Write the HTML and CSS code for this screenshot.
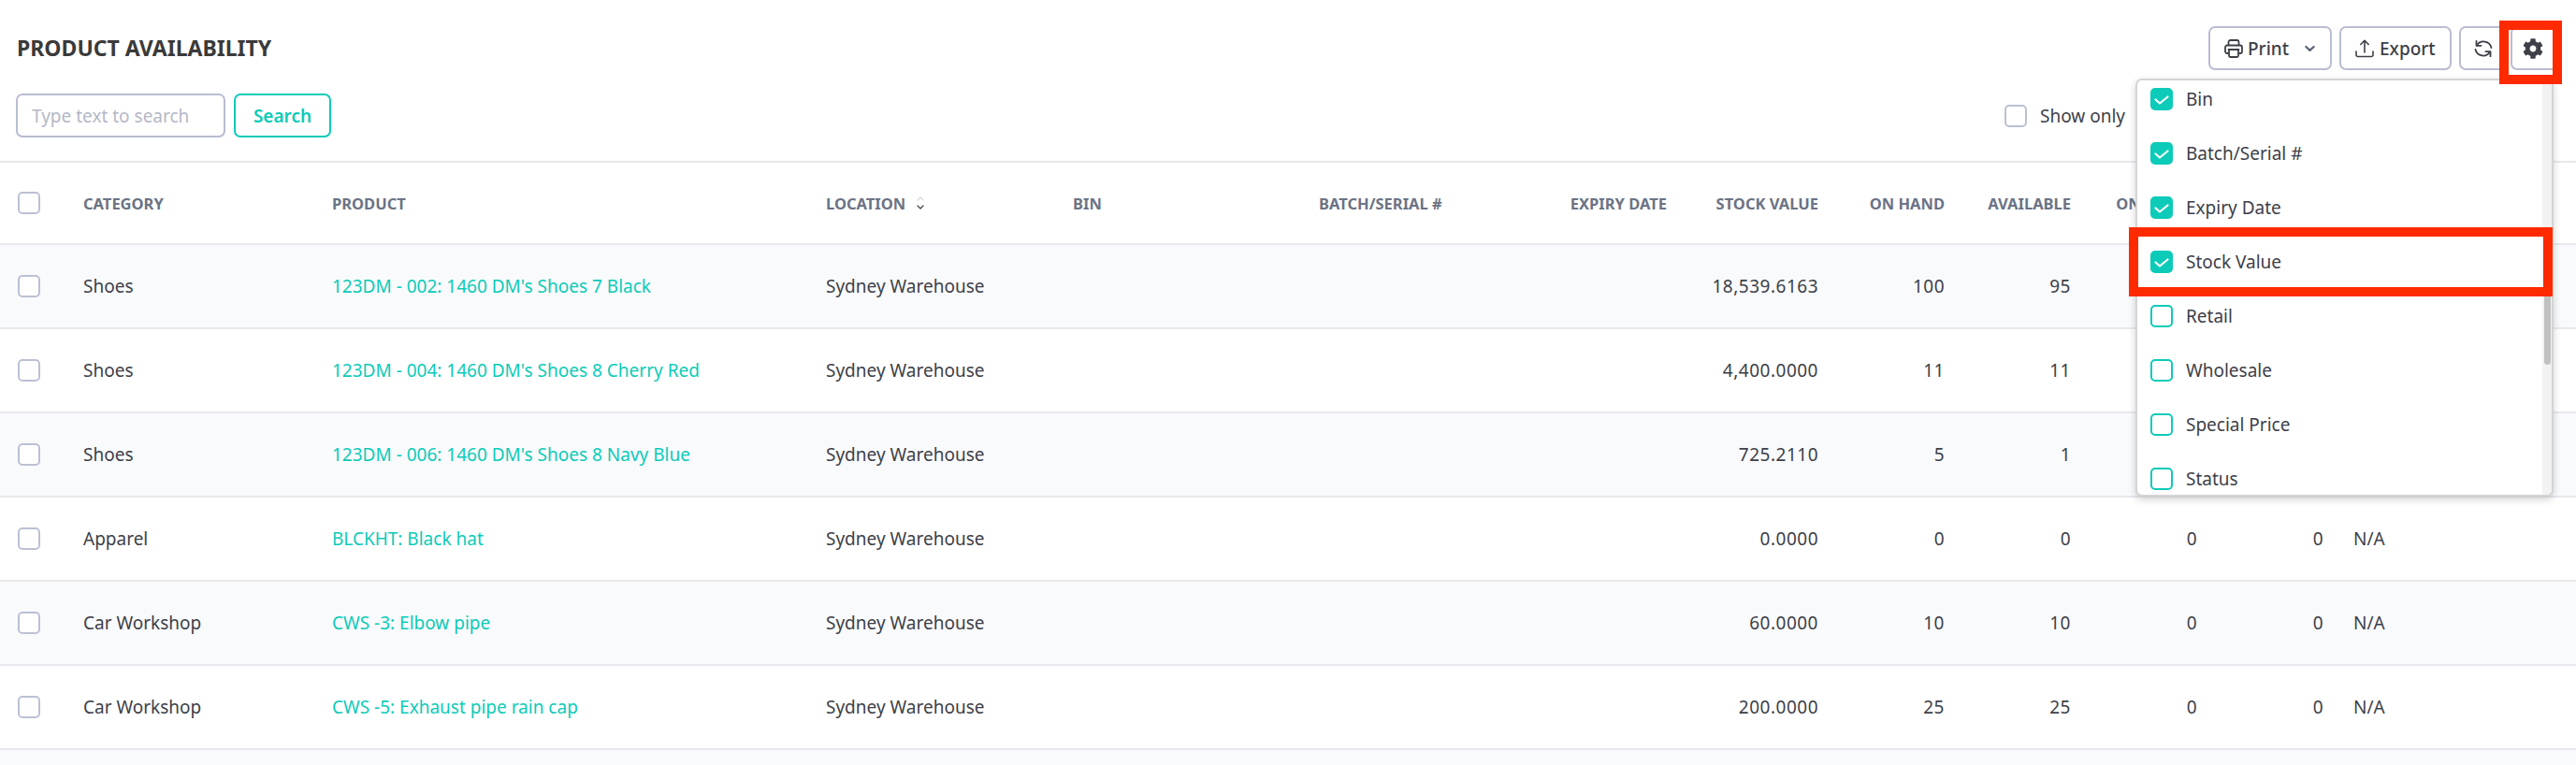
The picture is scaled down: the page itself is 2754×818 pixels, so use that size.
FILE: index.html
```html
<!DOCTYPE html>
<html lang="en">
<head>
<meta charset="utf-8">
<title>Product Availability</title>
<link rel="stylesheet" href="styles.css">
</head>
<body>
<svg class="defs" width="0" height="0" aria-hidden="true">
  <symbol id="tick" viewBox="0 0 24 24"><path d="M5.500 12.500L10 16.500 18.500 9.500" fill="none" stroke="#fff" stroke-width="2.200" stroke-linecap="round" stroke-linejoin="round"/></symbol>
</svg>
<div class="page">
  <header class="top">
    <h1 class="title">PRODUCT AVAILABILITY</h1>
    <div class="actions">
      <button class="btn btn-print">
        <svg class="ico" viewBox="0 0 20 20" fill="none" stroke="#3d4048" stroke-width="1.800" stroke-linejoin="round"><path d="M4.500 6.500V3A2 2 0 0 1 6.500 1h7a2 2 0 0 1 2 2v3.500"/><path d="M4.500 15H3a2 2 0 0 1-2-2V8.500a2 2 0 0 1 2-2h14a2 2 0 0 1 2 2V13a2 2 0 0 1-2 2h-1.500"/><path d="M3.800 11h12.400M5 11v6.500A1.500 1.500 0 0 0 6.500 19h7a1.500 1.500 0 0 0 1.500-1.500V11"/></svg>
        <span>Print</span>
        <svg class="chev" viewBox="0 0 12 8" fill="none" stroke="#5b6274" stroke-width="2.400" stroke-linecap="round" stroke-linejoin="round"><path d="M1.500 1.800L6 6l4.500-4.200"/></svg>
      </button>
      <button class="btn btn-export">
        <svg class="ico" viewBox="0 0 20 20" fill="none" stroke="#3d4048" stroke-width="1.600" stroke-linecap="round" stroke-linejoin="round"><path d="M10 14V1.500M5.800 5.500L10 1.300l4.200 4.200"/><path d="M1 13v3.700A1.800 1.800 0 0 0 2.800 18.500h14.400a1.800 1.800 0 0 0 1.800-1.800V13"/></svg>
        <span>Export</span>
      </button>
      <button class="btn btn-icon" aria-label="Refresh">
        <svg class="ico" viewBox="0 0 20 20" fill="none" stroke="#3d4048" stroke-width="1.800" stroke-linecap="round" stroke-linejoin="round"><path d="M18.500 9A8.500 8.500 0 0 0 3 6.500"/><path d="M2.500 1.800v5h5"/><path d="M1.500 11A8.500 8.500 0 0 0 17 13.500"/><path d="M17.500 18.200v-5h-5"/></svg>
      </button>
      <button class="btn btn-icon btn-gear" aria-label="Settings">
        <svg class="gear" viewBox="0 0 512 512"><path fill="#3d4048" d="M487.400 315.700l-42.600-24.600c4.300-23.200 4.300-47 0-70.200l42.600-24.600c4.900-2.800 7.100-8.600 5.500-14-11.100-35.600-30-67.800-54.700-94.600-3.800-4.100-10-5.100-14.800-2.300L380.800 110c-17.900-15.400-38.500-27.300-60.800-35.100V25.800c0-5.600-3.900-10.500-9.400-11.700-36.700-8.200-74.300-7.800-109.200 0-5.500 1.200-9.400 6.100-9.400 11.700V75c-22.200 7.900-42.800 19.800-60.800 35.100L88.700 85.500c-4.900-2.800-11-1.900-14.800 2.300-24.700 26.700-43.600 58.900-54.700 94.600-1.700 5.400.6 11.200 5.500 14L67.300 221c-4.300 23.200-4.300 47 0 70.200l-42.600 24.600c-4.900 2.800-7.100 8.600-5.500 14 11.100 35.600 30 67.800 54.700 94.600 3.800 4.100 10 5.100 14.800 2.300l42.600-24.600c17.900 15.400 38.500 27.300 60.800 35.100v49.200c0 5.600 3.900 10.500 9.400 11.700 36.700 8.200 74.300 7.800 109.200 0 5.500-1.200 9.400-6.100 9.400-11.700v-49.200c22.200-7.900 42.800-19.800 60.800-35.100l42.600 24.600c4.900 2.800 11 1.900 14.800-2.300 24.700-26.700 43.600-58.900 54.700-94.600 1.500-5.500-.7-11.300-5.600-14.100zM256 336c-44.100 0-80-35.900-80-80s35.900-80 80-80 80 35.900 80 80-35.900 80-80 80z"/></svg>
      </button>
    </div>
  </header>

  <div class="filters">
    <div class="search">
      <input class="search-input" type="text" placeholder="Type text to search">
      <button class="btn-search">Search</button>
    </div>
    <label class="show-only"><span class="cb"></span><span>Show only</span></label>
  </div>

  <table class="grid">
    <colgroup>
      <col class="c-check"><col class="c-cat"><col class="c-prod"><col class="c-loc"><col class="c-bin"><col class="c-batch"><col class="c-exp"><col class="c-stock"><col class="c-num"><col class="c-num"><col class="c-num"><col class="c-num"><col>
    </colgroup>
    <thead>
      <tr>
        <th><span class="cb"></span></th>
        <th>Category</th>
        <th>Product</th>
        <th><span class="sort">Location
          <svg class="sort-ico" viewBox="0 0 8 16" fill="none" stroke-width="1.200" stroke-linecap="round" stroke-linejoin="round"><path d="M1 5l3-3 3 3" stroke="#d5d7df"/><path d="M1 11l3 3 3-3" stroke="#3d4048"/></svg>
        </span></th>
        <th>Bin</th>
        <th>Batch/Serial #</th>
        <th class="r">Expiry Date</th>
        <th class="r">Stock Value</th>
        <th class="r">On Hand</th>
        <th class="r">Available</th>
        <th class="r">On Order</th>
        <th></th>
        <th></th>
      </tr>
    </thead>
    <tbody>
      <tr><td><span class="cb"></span></td><td>Shoes</td><td><a href="#">123DM - 002: 1460 DM's Shoes 7 Black</a></td><td>Sydney Warehouse</td><td></td><td></td><td></td><td class="r">18,539.6163</td><td class="r">100</td><td class="r">95</td><td></td><td></td><td></td></tr>
      <tr><td><span class="cb"></span></td><td>Shoes</td><td><a href="#">123DM - 004: 1460 DM's Shoes 8 Cherry Red</a></td><td>Sydney Warehouse</td><td></td><td></td><td></td><td class="r">4,400.0000</td><td class="r">11</td><td class="r">11</td><td></td><td></td><td></td></tr>
      <tr><td><span class="cb"></span></td><td>Shoes</td><td><a href="#">123DM - 006: 1460 DM's Shoes 8 Navy Blue</a></td><td>Sydney Warehouse</td><td></td><td></td><td></td><td class="r">725.2110</td><td class="r">5</td><td class="r">1</td><td></td><td></td><td></td></tr>
      <tr><td><span class="cb"></span></td><td>Apparel</td><td><a href="#">BLCKHT: Black hat</a></td><td>Sydney Warehouse</td><td></td><td></td><td></td><td class="r">0.0000</td><td class="r">0</td><td class="r">0</td><td class="r">0</td><td class="r">0</td><td>N/A</td></tr>
      <tr><td><span class="cb"></span></td><td>Car Workshop</td><td><a href="#">CWS -3: Elbow pipe</a></td><td>Sydney Warehouse</td><td></td><td></td><td></td><td class="r">60.0000</td><td class="r">10</td><td class="r">10</td><td class="r">0</td><td class="r">0</td><td>N/A</td></tr>
      <tr><td><span class="cb"></span></td><td>Car Workshop</td><td><a href="#">CWS -5: Exhaust pipe rain cap</a></td><td>Sydney Warehouse</td><td></td><td></td><td></td><td class="r">200.0000</td><td class="r">25</td><td class="r">25</td><td class="r">0</td><td class="r">0</td><td>N/A</td></tr>
      <tr><td colspan="13"></td></tr>
    </tbody>
  </table>

  <div class="menu">
    <ul class="menu-list">
      <li class="menu-item"><span class="mcb on"><svg viewBox="0 0 24 24"><use href="#tick"/></svg></span>Bin</li>
      <li class="menu-item"><span class="mcb on"><svg viewBox="0 0 24 24"><use href="#tick"/></svg></span>Batch/Serial #</li>
      <li class="menu-item"><span class="mcb on"><svg viewBox="0 0 24 24"><use href="#tick"/></svg></span>Expiry Date</li>
      <li class="menu-item"><span class="mcb on"><svg viewBox="0 0 24 24"><use href="#tick"/></svg></span>Stock Value</li>
      <li class="menu-item"><span class="mcb"></span>Retail</li>
      <li class="menu-item"><span class="mcb"></span>Wholesale</li>
      <li class="menu-item"><span class="mcb"></span>Special Price</li>
      <li class="menu-item"><span class="mcb"></span>Status</li>
    </ul>
    <div class="scrollbar"><div class="thumb"></div></div>
  </div>

  <div class="mark mark-gear"></div>
  <div class="mark mark-row"></div>
</div>
</body>
</html>
```
FILE: styles.css
```css
* { box-sizing: border-box; }
html, body { margin: 0; padding: 0; background: #fff; }
body { font-family: "Noto Sans", "Liberation Sans", sans-serif; font-size: 19px; color: #3d4048; overflow: hidden; }
.defs { position: absolute; }
.page { position: relative; width: 2754px; height: 818px; overflow: hidden; padding-top: 28px; }

.top { display: flex; justify-content: space-between; align-items: center; height: 47px; padding: 0 19px 0 18px; }
.title { margin: 0 0 2px; font-size: 23px; font-weight: 700; color: #3a3a3a; }
.actions { display: flex; gap: 8px; }
.btn { display: flex; align-items: center; height: 47px; padding: 0; border: 2px solid #b9bdd1; border-radius: 7px; background: #fff; font: 500 19px "Noto Sans", sans-serif; color: #3d4048; }
.btn-print { width: 132px; padding-left: 15px; }
.btn-print span { margin-left: 5px; }
.btn-export { width: 120px; padding-left: 15px; }
.btn-export span { margin-left: 6px; }
.btn-icon { width: 51px; justify-content: center; }
.btn-gear { margin-left: -4px; padding-right: 3px; }
.ico { width: 20px; height: 20px; flex: none; }
.chev { width: 11px; height: 8px; margin-left: 17px; flex: none; }
.gear { width: 22px; height: 22px; }

.filters { display: flex; justify-content: space-between; align-items: center; height: 47px; margin-top: 25px; padding-left: 17px; }
.search { display: flex; gap: 9px; }
.search-input { width: 224px; height: 47px; padding: 0 15px; border: 2px solid #b9bdd1; border-radius: 7px; font: 400 19px "Noto Sans", sans-serif; color: #3d4048; outline: none; }
.search-input::placeholder { color: #b4b8c6; opacity: 1; }
.btn-search { width: 104px; height: 47px; padding: 0; border: 2px solid #0ccbb8; border-radius: 7px; background: #fff; font: 600 19px "Noto Sans", sans-serif; color: #0ccbb8; }
.show-only { display: flex; align-items: center; gap: 14px; width: 611px; white-space: nowrap; }

.cb { display: block; width: 24px; height: 24px; border: 2px solid #bcc0d4; border-radius: 5px; background: #fff; flex: none; }

.grid { width: 2754px; margin-top: 25px; border-collapse: collapse; table-layout: fixed; border-top: 2px solid #e8e8ee; }
.c-check { width: 73px; } .c-cat { width: 266px; } .c-prod { width: 528px; } .c-loc { width: 264px; } .c-bin { width: 263px; }
.c-batch { width: 266px; } .c-exp { width: 138px; } .c-stock { width: 162px; } .c-num { width: 135px; }
.grid th, .grid td { height: 90px; padding: 0 16px; border-bottom: 2px solid #e8e8ee; text-align: left; vertical-align: middle; white-space: nowrap; }
.grid thead th { height: 88px; font-size: 16.500px; font-weight: 700; color: #6b7385; text-transform: uppercase; }
.grid th:first-child, .grid td:first-child { padding: 0 0 0 19px; }
.grid .r { text-align: right; }
.grid td.r { letter-spacing: .5px; }
.grid tbody tr:nth-child(odd) { background: #f9fafc; }
.grid a { color: #0ccbb8; text-decoration: none; }
.sort { display: inline-flex; align-items: center; gap: 12px; }
.sort-ico { width: 8px; height: 16px; }

.menu { position: absolute; left: 2283px; top: 84px; width: 447px; height: 447px; background: #fff; border: 2px solid #d4d4d6; border-radius: 7px; box-shadow: 0 3px 8px rgba(0,0,0,.18); overflow: hidden; }
.menu-list { list-style: none; margin: -9px 0 0; padding: 0; }
.menu-item { display: flex; align-items: center; gap: 14px; height: 58px; padding-left: 14px; font-size: 19px; color: #3d4048; }
.mcb { display: block; width: 24px; height: 24px; border: 2px solid #0ccbb8; border-radius: 5px; background: #fff; flex: none; }
.mcb.on { border: 0; background: #0ccbb8; }
.mcb svg { display: block; width: 24px; height: 24px; }
.scrollbar { position: absolute; top: 0; right: 0; bottom: 0; width: 10px; background: #f2f2f2; }
.thumb { position: absolute; top: 210px; left: 2px; width: 7px; height: 94px; background: #c1c1c1; border-radius: 4px; }

.mark { position: absolute; border: 10px solid #ff2a00; pointer-events: none; }
.mark-gear { left: 2672px; top: 22px; width: 67px; height: 68px; }
.mark-row { left: 2276px; top: 243px; width: 453px; height: 74px; }
```
